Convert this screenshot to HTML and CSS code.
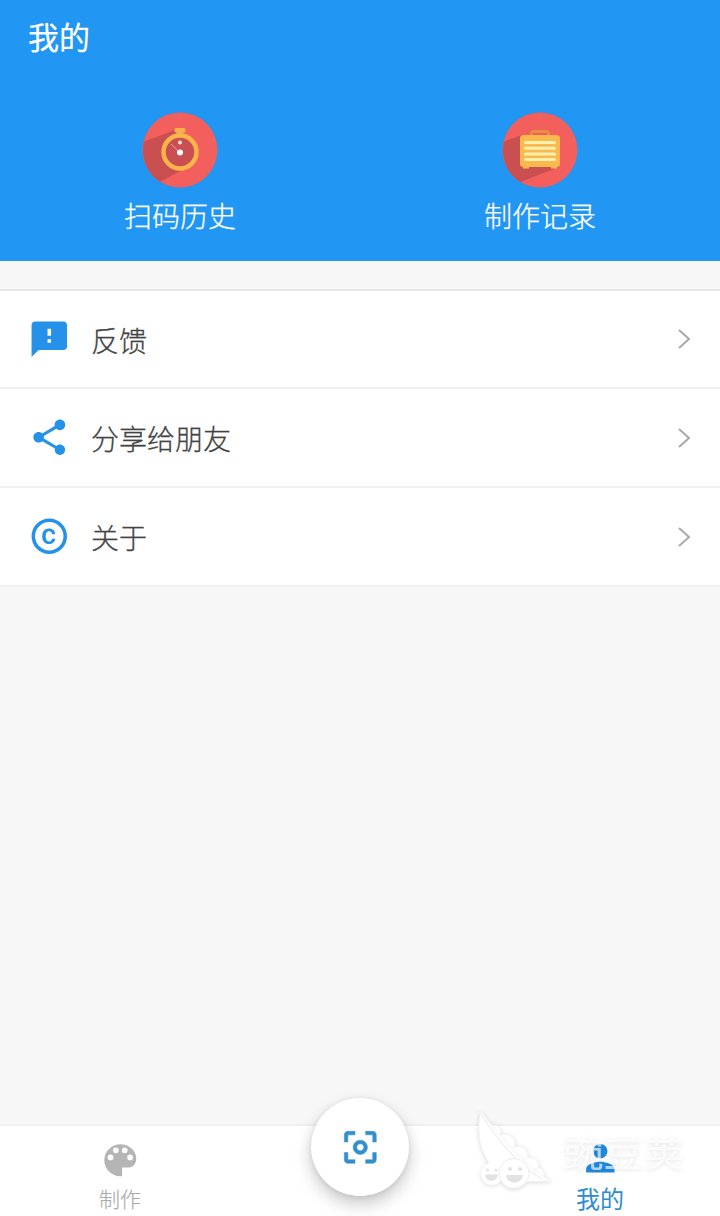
FILE: index.html
```html
<!DOCTYPE html>
<html lang="zh-CN">
<head>
<meta charset="utf-8">
<title>我的</title>
<link rel="stylesheet" href="styles.css">
</head>
<body>
<div class="app">
  <header class="header">
    <h1 class="title">我的</h1>
    <div class="shortcuts">
      <div class="shortcut">
        <svg class="badge" viewBox="0 0 76 76">
          <circle cx="38" cy="38" r="37.5" fill="#f25f5c"/>
          <path d="M2 29.500 33 18l18 34L18 70A37.500 37.500 0 0 1 2 29.500z" fill="#ca4f50"/>
          <path d="M34.500 17h7v6h-7z" fill="#f4a94a"/>
          <rect x="32.500" y="16" width="11" height="4.500" rx="1.500" fill="#f6b14c"/>
          <circle cx="38" cy="40" r="16.500" fill="#c94f52" stroke="#fab44c" stroke-width="4.500"/>
          <path d="M38 40.500 29 32" stroke="#e6a090" stroke-width="1"/>
          <circle cx="38" cy="30.500" r="2" fill="#fbdcd4"/>
          <circle cx="38" cy="40.500" r="3" fill="#fff"/>
        </svg>
        <span class="shortcut-label">扫码历史</span>
      </div>
      <div class="shortcut">
        <svg class="badge" viewBox="0 0 76 76">
          <circle cx="38" cy="38" r="37.500" fill="#f25f5c"/>
          <path d="M2 29.500 20 23l37 32L18 70A37.500 37.500 0 0 1 2 29.500z" fill="#ca4f50"/>
          <path d="M29.500 23v-2q0-1.500 1.500-1.500h14q1.500 0 1.500 1.500v2" fill="none" stroke="#e78c45" stroke-width="3"/>
          <rect x="18" y="23" width="40" height="32" rx="3.500" fill="#fbb84f"/>
          <path d="M21 54h6v2.500h-6zM49 54h6v2.500h-6z" fill="#fbb84f"/>
          <path d="M23.500 30.500h29M23.500 36.200h29M23.500 41.900h29M23.500 47.600h29" stroke="#fff0ae" stroke-width="3" stroke-linecap="round"/>
        </svg>
        <span class="shortcut-label">制作记录</span>
      </div>
    </div>
  </header>

  <main class="menu">
    <div class="row">
      <svg class="icon" viewBox="0 0 24 24"><path d="M20 2H4c-1.100 0-1.990.9-1.990 2L2 22l4-4h14c1.100 0 2-.9 2-2V4c0-1.100-.9-2-2-2zm-7 12h-2v-2h2v2zm0-4h-2V6h2v4z"/></svg>
      <span class="row-label">反馈</span>
      <svg class="chevron" viewBox="0 0 14 22"><path d="m2 2 10 9-10 9"/></svg>
    </div>
    <div class="row">
      <svg class="icon" viewBox="0 0 24 24"><path d="M18 16.080c-.76 0-1.440.3-1.960.77L8.910 12.700c.05-.23.09-.46.09-.7s-.04-.47-.09-.7l7.050-4.110c.54.5 1.250.81 2.040.81 1.660 0 3-1.340 3-3s-1.340-3-3-3-3 1.340-3 3c0 .24.04.47.09.7L8.040 9.810C7.500 9.310 6.790 9 6 9c-1.660 0-3 1.340-3 3s1.340 3 3 3c.79 0 1.500-.31 2.040-.81l7.120 4.160c-.05.21-.08.43-.08.65 0 1.610 1.310 2.920 2.920 2.920s2.920-1.310 2.920-2.920-1.310-2.920-2.920-2.920z"/></svg>
      <span class="row-label">分享给朋友</span>
      <svg class="chevron" viewBox="0 0 14 22"><path d="m2 2 10 9-10 9"/></svg>
    </div>
    <div class="row">
      <svg class="icon" viewBox="0 0 24 24"><path d="M10.080 10.860c.05-.33.16-.62.300-.870s.34-.46.590-.620c.24-.15.540-.220.910-.230.230.010.440.050.630.130.200.090.380.210.520.360s.25.330.340.530.130.420.140.640h1.790c-.020-.470-.110-.900-.280-1.290s-.400-.730-.700-1.010-.660-.500-1.080-.660-.880-.230-1.390-.230c-.650 0-1.220.110-1.700.340s-.880.530-1.200.920-.560.840-.710 1.360S8 11.290 8 11.870v.270c0 .580.080 1.120.230 1.640s.390.970.710 1.350.720.690 1.200.910 1.050.340 1.700.340c.470 0 .910-.080 1.320-.230s.770-.360 1.080-.630.560-.580.740-.940.290-.740.300-1.150h-1.790c-.010.210-.060.400-.150.580s-.210.330-.360.460-.320.230-.520.300c-.190.070-.390.090-.600.100-.360-.010-.660-.080-.890-.230-.250-.160-.450-.370-.590-.620s-.250-.550-.300-.880-.080-.670-.080-1v-.270c0-.350.030-.680.080-1.010zM12 2C6.480 2 2 6.480 2 12s4.480 10 10 10 10-4.480 10-10S17.520 2 12 2zm0 18c-4.410 0-8-3.590-8-8s3.590-8 8-8 8 3.590 8 8-3.590 8-8 8z"/></svg>
      <span class="row-label">关于</span>
      <svg class="chevron" viewBox="0 0 14 22"><path d="m2 2 10 9-10 9"/></svg>
    </div>
  </main>

  <nav class="tabs">
    <div class="tab">
      <svg class="icon" viewBox="0 0 24 24"><path fill-rule="evenodd" d="M12 3c-5 0-9 4-9 9s4 9 9 9h1v-5h4c2.500 0 4-2.500 4-5 0-4.420-4.030-8-9-8zM6.500 12a1.600 1.600 0 1 1 0-3.200 1.600 1.600 0 0 1 0 3.200zm3-4a1.600 1.600 0 1 1 0-3.200 1.600 1.600 0 0 1 0 3.200zm5 0a1.600 1.600 0 1 1 0-3.200 1.600 1.600 0 0 1 0 3.200zm3 4a1.600 1.600 0 1 1 0-3.200 1.600 1.600 0 0 1 0 3.200z"/></svg>
      <span class="tab-label">制作</span>
    </div>
    <div class="scan">
      <svg class="icon" viewBox="0 0 24 24"><path d="M5 15H3v4c0 1.100.9 2 2 2h4v-2H5v-4zM5 5h4V3H5c-1.100 0-2 .9-2 2v4h2V5zm14-2h-4v2h4v4h2V5c0-1.100-.9-2-2-2zm0 16h-4v2h4c1.100 0 2-.9 2-2v-4h-2v4zM12 8c-2.210 0-4 1.790-4 4s1.790 4 4 4 4-1.790 4-4-1.790-4-4-4zm0 6c-1.100 0-2-.9-2-2s.9-2 2-2 2 .9 2 2-.9 2-2 2z"/></svg>
    </div>
    <div class="tab tab-active">
      <svg class="icon" viewBox="0 0 24 24"><path d="M12 12c2.210 0 4-1.790 4-4s-1.790-4-4-4-4 1.790-4 4 1.790 4 4 4zm0 2c-2.670 0-8 1.340-8 4v2h16v-2c0-2.660-5.330-4-8-4z"/></svg>
      <span class="tab-label">我的</span>
    </div>
    <div class="watermark">
      <svg class="pod" viewBox="0 0 76 84">
        <g fill="#fff" stroke="#f2f2f2" stroke-width="1">
          <circle cx="18" cy="24" r="7"/><circle cx="29" cy="36" r="10"/><circle cx="42" cy="48" r="10"/><circle cx="54" cy="58" r="9"/><circle cx="62" cy="66" r="6"/>
          <path d="M5 3C-1 28 5 54 27 68c13 6 27 6 48 5C54 62 25 31 5 3z"/>
        </g>
        <path d="M5 6C20 30 43 58 66 71" fill="none" stroke="#f2f2f2" stroke-width="1.500"/>
        <circle cx="16" cy="66" r="11" fill="#fff"/><circle cx="38" cy="65.500" r="15" fill="#fff" stroke="#ececec"/>
        <g fill="#e2e2e2">
          <circle cx="11.500" cy="62" r="1.500"/><circle cx="20" cy="62" r="1.500"/><path d="M9 66.500h13c-1 8.500-12 8.500-13 0z"/>
          <circle cx="34" cy="61" r="2"/><circle cx="44" cy="61" r="2"/><path d="M30 67h17c-1 10-16 10-17 0z"/>
        </g>
      </svg>
      <span class="watermark-text">豌豆荚</span>
    </div>
  </nav>
</div>
</body>
</html>
```
FILE: styles.css
```css
* { box-sizing: border-box; }

body {
  margin: 0;
  background: #f7f7f7;
  font-family: "Noto Sans CJK SC", sans-serif;
  color: #444;
}

.app {
  display: flex;
  flex-direction: column;
  height: 1216px;
  overflow: hidden;
}

.header {
  height: 261px;
  padding-top: 13px;
  background: #2196f3;
  color: #fff;
}

.title {
  margin: 0 0 53px 28px;
  font-size: 31px;
  line-height: 46px;
  font-weight: 400;
  -webkit-text-stroke: .2px;
}

.shortcuts { display: flex; }

.shortcut {
  flex: 1;
  display: flex;
  flex-direction: column;
  align-items: center;
}

.badge { width: 76px; height: 76px; }

.shortcut-label {
  margin-top: 7px;
  font-size: 28px;
  line-height: 40px;
  font-weight: 300;
  -webkit-text-stroke: .25px;
}

.menu {
  margin-top: 28px;
  border-top: 2px solid #e6e6e6;
  background: #fff;
}

.row {
  display: flex;
  align-items: center;
  height: 99px;
  padding: 0 29px 0 27.500px;
  border-bottom: 2px solid #f0f0f0;
}

.row:first-child { height: 98px; }

.icon {
  flex: none;
  width: 42.600px;
  height: 42.600px;
  fill: #2591e8;
}

.row-label {
  flex: 1;
  margin-left: 21px;
  padding-top: 1px;
  font-size: 28px;
  line-height: 40px;
  font-weight: 300;
  -webkit-text-stroke: .3px;
}

.chevron {
  width: 14px;
  height: 22px;
  fill: none;
  stroke: #a9a9a9;
  stroke-width: 2;
}

.tabs {
  position: relative;
  display: flex;
  justify-content: space-between;
  height: 92px;
  margin-top: auto;
  border-top: 2px solid #f0f0f0;
  background: #fff;
}

.tab {
  display: flex;
  flex-direction: column;
  align-items: center;
  width: 240px;
  padding-top: 13px;
  color: #aaa;
}

.tab .icon { fill: #b5b5b5; }

.tab-label {
  margin-top: 2px;
  font-size: 21px;
  line-height: 28px;
  font-weight: 300;
  -webkit-text-stroke: .15px;
}

.tab-active {
  padding-top: 11px;
  color: #2f8ccf;
}

.tab-active .icon { fill: #2189dc; }

.tab-active .tab-label {
  margin-top: 4px;
  font-size: 24px;
  font-weight: 400;
  -webkit-text-stroke: 0;
}

.scan {
  display: flex;
  align-items: center;
  justify-content: center;
  width: 98px;
  height: 98px;
  margin-top: -28px;
  border-radius: 50%;
  background: #fff;
  box-shadow: 0 8px 17px rgba(0, 0, 0, .22), 0 1px 5px rgba(0, 0, 0, .09);
}

.scan .icon {
  fill: #318fcd;
  stroke: #318fcd;
  stroke-width: .3;
}

.watermark {
  position: absolute;
  left: 476px;
  top: -18px;
  display: flex;
  filter: drop-shadow(0 1px 2px rgba(0, 0, 0, .14));
}

.pod { width: 76px; height: 84px; }

.watermark-text {
  height: 40px;
  margin: 24px 0 0 11px;
  color: rgba(255, 255, 255, .65);
  font-size: 40.500px;
  line-height: 40px;
  font-weight: 500;
  transform: scaleY(.88);
}
```
